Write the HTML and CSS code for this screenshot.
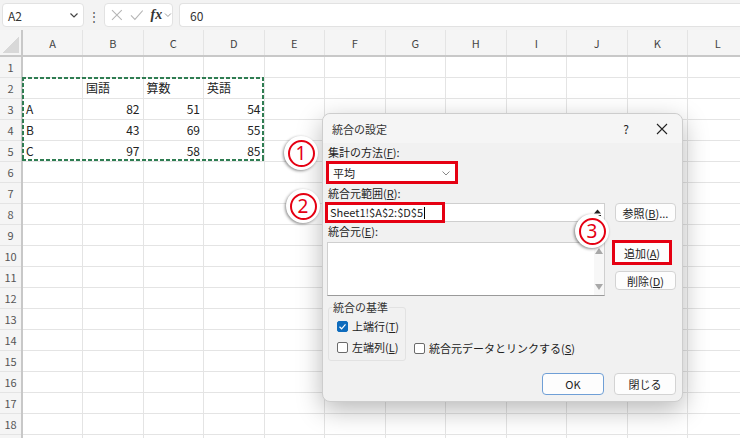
FILE: index.html
```html
<!DOCTYPE html>
<html lang="ja">
<head>
    <meta charset="UTF-8">
    <meta name="viewport" content="width=device-width, initial-scale=1.0">
    <title>統合の設定</title>
    <link rel="stylesheet" href="styles.css">
</head>
<body>
    <div class="app">
        <div class="formula-bar">
            <div class="name-box">
                <span>A2</span>
                <svg width="10" height="10" viewBox="0 0 10 10"><polyline points="1.5,3.5 5,7 8.5,3.5" fill="none" stroke="#444" stroke-width="1.2"/></svg>
            </div>
            <span class="grip">⋮</span>
            <div class="fx-box">
                <svg width="12" height="12" viewBox="0 0 12 12"><path d="M1 1L11 11M11 1L1 11" stroke="#b5b5b5" stroke-width="1.1" fill="none"/></svg>
                <svg width="14" height="12" viewBox="0 0 14 12"><polyline points="1,6.5 5,10.5 13,1.5" stroke="#b5b5b5" stroke-width="1.1" fill="none"/></svg>
                <i class="fx">fx</i>
                <svg width="8" height="8" viewBox="0 0 8 8"><polyline points="1,2.5 4,5.5 7,2.5" fill="none" stroke="#999" stroke-width="1"/></svg>
            </div>
            <div class="formula-input">60</div>
        </div>

        <table class="sheet">
            <colgroup>
                <col class="rh"><col><col><col><col><col><col><col><col><col><col><col><col>
            </colgroup>
            <thead>
                <tr><th class="corner"></th><th>A</th><th>B</th><th>C</th><th>D</th><th>E</th><th>F</th><th>G</th><th>H</th><th>I</th><th>J</th><th>K</th><th>L</th></tr>
            </thead>
            <tbody>
                <tr><th>1</th><td></td><td></td><td></td><td></td><td></td><td></td><td></td><td></td><td></td><td></td><td></td><td></td></tr>
                <tr><th>2</th><td></td><td>国語</td><td>算数</td><td>英語</td><td></td><td></td><td></td><td></td><td></td><td></td><td></td><td></td></tr>
                <tr><th>3</th><td>A</td><td class="num">82</td><td class="num">51</td><td class="num">54</td><td></td><td></td><td></td><td></td><td></td><td></td><td></td><td></td></tr>
                <tr><th>4</th><td>B</td><td class="num">43</td><td class="num">69</td><td class="num">55</td><td></td><td></td><td></td><td></td><td></td><td></td><td></td><td></td></tr>
                <tr><th>5</th><td>C</td><td class="num">97</td><td class="num">58</td><td class="num">85</td><td></td><td></td><td></td><td></td><td></td><td></td><td></td><td></td></tr>
                <tr><th>6</th><td></td><td></td><td></td><td></td><td></td><td></td><td></td><td></td><td></td><td></td><td></td><td></td></tr>
                <tr><th>7</th><td></td><td></td><td></td><td></td><td></td><td></td><td></td><td></td><td></td><td></td><td></td><td></td></tr>
                <tr><th>8</th><td></td><td></td><td></td><td></td><td></td><td></td><td></td><td></td><td></td><td></td><td></td><td></td></tr>
                <tr><th>9</th><td></td><td></td><td></td><td></td><td></td><td></td><td></td><td></td><td></td><td></td><td></td><td></td></tr>
                <tr><th>10</th><td></td><td></td><td></td><td></td><td></td><td></td><td></td><td></td><td></td><td></td><td></td><td></td></tr>
                <tr><th>11</th><td></td><td></td><td></td><td></td><td></td><td></td><td></td><td></td><td></td><td></td><td></td><td></td></tr>
                <tr><th>12</th><td></td><td></td><td></td><td></td><td></td><td></td><td></td><td></td><td></td><td></td><td></td><td></td></tr>
                <tr><th>13</th><td></td><td></td><td></td><td></td><td></td><td></td><td></td><td></td><td></td><td></td><td></td><td></td></tr>
                <tr><th>14</th><td></td><td></td><td></td><td></td><td></td><td></td><td></td><td></td><td></td><td></td><td></td><td></td></tr>
                <tr><th>15</th><td></td><td></td><td></td><td></td><td></td><td></td><td></td><td></td><td></td><td></td><td></td><td></td></tr>
                <tr><th>16</th><td></td><td></td><td></td><td></td><td></td><td></td><td></td><td></td><td></td><td></td><td></td><td></td></tr>
                <tr><th>17</th><td></td><td></td><td></td><td></td><td></td><td></td><td></td><td></td><td></td><td></td><td></td><td></td></tr>
                <tr><th>18</th><td></td><td></td><td></td><td></td><td></td><td></td><td></td><td></td><td></td><td></td><td></td><td></td></tr>
                <tr><th></th><td></td><td></td><td></td><td></td><td></td><td></td><td></td><td></td><td></td><td></td><td></td><td></td></tr>
            </tbody>
        </table>

        <!-- copy range A2:D5 -->
        <div class="marching-ants"></div>

        <div class="dialog">
            <div class="dlg-title">
                <span class="dlg-name">統合の設定</span>
                <span class="dlg-help">?</span>
                <svg class="dlg-close" width="12" height="12" viewBox="0 0 12 12"><path d="M1 1L11 11M11 1L1 11" stroke="#222" stroke-width="1.1" fill="none"/></svg>
            </div>
            <div class="dlg-body">
                <div class="field-label">集計の方法(<u>F</u>):</div>
                <div class="select">
                    <span>平均</span>
                    <svg width="10" height="10" viewBox="0 0 10 10"><polyline points="1.5,3.5 5,7 8.5,3.5" fill="none" stroke="#888" stroke-width="1"/></svg>
                </div>

                <div class="field-label">統合元範囲(<u>R</u>):</div>
                <div class="ref-input">
                    <span class="ref-value">Sheet1!$A$2:$D$5<i class="caret"></i></span>
                    <svg class="collapse" width="9" height="9" viewBox="0 0 9 9"><path d="M1 5.5L4.5 1.5L8 5.5Z" fill="#222"/><path d="M1 7.5H8" stroke="#222" stroke-width="1"/></svg>
                </div>
                <button type="button" class="btn ref-btn">参照(<u>B</u>)...</button>

                <div class="field-label">統合元(<u>E</u>):</div>
                <div class="list-box">
                    <div class="scroll">
                        <svg width="8" height="6" viewBox="0 0 8 6"><path d="M0 6L4 0L8 6Z" fill="#a8a8a8"/></svg>
                        <svg width="8" height="6" viewBox="0 0 8 6"><path d="M0 0L4 6L8 0Z" fill="#a8a8a8"/></svg>
                    </div>
                </div>
                <div class="side-buttons">
                    <button type="button" class="btn marked">追加(<u>A</u>)</button>
                    <button type="button" class="btn">削除(<u>D</u>)</button>
                </div>

                <div class="options">
                    <fieldset class="group">
                        <legend>統合の基準</legend>
                        <label class="check"><span class="box checked"><svg width="9" height="9" viewBox="0 0 9 9"><polyline points="1.5,4.8 3.6,6.8 7.5,2.4" fill="none" stroke="#fff" stroke-width="1.2"/></svg></span>上端行(<u>T</u>)</label>
                        <label class="check"><span class="box"></span>左端列(<u>L</u>)</label>
                    </fieldset>
                    <label class="check link-check"><span class="box"></span>統合元データとリンクする(<u>S</u>)</label>
                </div>

                <div class="dlg-footer">
                    <button type="button" class="btn ok">OK</button>
                    <button type="button" class="btn">閉じる</button>
                </div>
            </div>
        </div>

        <div class="badge b1"><span>1</span></div>
        <div class="badge b2"><span>2</span></div>
        <div class="badge b3"><span>3</span></div>
    </div>
</body>
</html>
```

FILE: styles.css
```css
html, body {
    margin: 0;
    overflow: hidden;
}
body {
    font-family: "Noto Sans CJK JP", "Noto Sans", sans-serif;
    color: #222;
    background: #fff;
}
.app {
    position: relative;
    width: 740px;
    height: 438px;
    overflow: hidden;
}

/* formula bar */
.formula-bar {
    display: flex;
    align-items: center;
    height: 30px;
    background: #f3f3f3;
}
.name-box {
    display: flex;
    align-items: center;
    justify-content: space-between;
    box-sizing: border-box;
    width: 82px;
    height: 24px;
    margin-left: 2px;
    padding: 0 4px 0 5px;
    background: #fff;
    border: 1px solid #e2e2e2;
    border-radius: 4px;
    font-size: 12px;
    color: #333;
}
.grip {
    width: 20px;
    text-align: center;
    font-size: 12px;
    color: #555;
}
.fx-box {
    display: flex;
    align-items: center;
    gap: 7px;
    box-sizing: border-box;
    width: 69px;
    height: 24px;
    padding-left: 6px;
    background: #fff;
    border: 1px solid #e2e2e2;
    border-radius: 4px;
}
.fx {
    font-family: "Liberation Serif", serif;
    font-weight: bold;
    font-size: 14px;
    color: #333;
    margin-right: -5px;
}
.formula-input {
    flex: 1;
    box-sizing: border-box;
    height: 24px;
    margin-left: 6px;
    padding-left: 10px;
    line-height: 24px;
    background: #fff;
    border: 1px solid #e2e2e2;
    border-right: none;
    border-radius: 4px 0 0 4px;
    font-size: 12px;
    color: #333;
}

/* grid */
.sheet {
    border-collapse: collapse;
    table-layout: fixed;
    width: 748px;
    font-size: 12px;
}
.sheet col {
    width: 60.5px;
}
.sheet col.rh {
    width: 22px;
}
.sheet thead th {
    height: 25px;
    padding: 0;
    background: #f5f5f5;
    border-right: 1px solid #e4e4e4;
    border-bottom: 2px solid #c8c8c8;
    font-weight: normal;
    font-size: 11px;
    color: #444;
}
.sheet thead th.corner {
    border-right: 2px solid #c8c8c8;
    background: linear-gradient(135deg, transparent 50%, #d8d8d8 50%) no-repeat right 2px bottom 2px / 16px 16px, #f5f5f5;
}
.sheet tbody tr {
    height: 21px;
}
.sheet tbody th {
    padding: 0;
    background: #f5f5f5;
    border-right: 2px solid #c8c8c8;
    border-bottom: 1px solid #e4e4e4;
    font-weight: normal;
    font-size: 11px;
    color: #555;
}
.sheet td {
    padding: 0 3px 0 3px;
    border: 1px solid #e4e4e4;
    line-height: 18px;
    white-space: nowrap;
}
.sheet td.num {
    text-align: right;
}

.marching-ants {
    position: absolute;
    left: 22px;
    top: 77px;
    width: 242px;
    height: 84px;
    box-sizing: border-box;
    background:
        repeating-linear-gradient(90deg, #2f7d52 0 4px, transparent 4px 6px) left top / 100% 2px no-repeat,
        repeating-linear-gradient(90deg, #2f7d52 0 4px, transparent 4px 6px) left bottom / 100% 2px no-repeat,
        repeating-linear-gradient(180deg, #2f7d52 0 4px, transparent 4px 6px) left top / 2px 100% no-repeat,
        repeating-linear-gradient(180deg, #2f7d52 0 4px, transparent 4px 6px) right top / 2px 100% no-repeat;
}

/* dialog */
.dialog {
    position: absolute;
    left: 322px;
    top: 113px;
    width: 361px;
    height: 289px;
    box-sizing: border-box;
    background: #f1f1f1;
    border: 1px solid #cdcdcd;
    border-radius: 8px;
    box-shadow: 0 8px 26px rgba(0, 0, 0, 0.28);
    font-size: 11px;
}
.dlg-title {
    display: flex;
    align-items: center;
    height: 29px;
    padding: 0 0 0 9px;
    background: #f5f5f5;
    border-radius: 8px 8px 0 0;
}
.dlg-name {
    flex: 1;
    color: #333;
}
.dlg-help {
    width: 20px;
    margin-right: 20px;
    font-size: 12px;
    text-align: center;
    color: #222;
}
.dlg-close {
    margin-right: 14px;
}
.dlg-body {
    display: grid;
    grid-template-columns: 279px 61px;
    column-gap: 10px;
    padding: 0 6px 0 3px;
}
.field-label {
    grid-column: 1 / -1;
    height: 18px;
    line-height: 18px;
    padding-left: 2px;
    color: #222;
}
.select {
    grid-column: 1;
    display: flex;
    align-items: center;
    justify-content: space-between;
    box-sizing: border-box;
    width: 132px;
    height: 23px;
    padding: 0 4px 0 4px;
    background: #fff;
    border: 3px solid #e50012;
}
.ref-input {
    grid-column: 1;
    display: flex;
    align-items: center;
    justify-content: space-between;
    box-sizing: border-box;
    height: 19px;
    margin-top: 1px;
    background: #fff;
    border: 1px solid #cfcfcf;
}
.ref-value {
    box-sizing: border-box;
    width: 120px;
    height: 21px;
    margin: -1px 0 0 -2px;
    padding: 0 2px;
    line-height: 15px;
    border: 3px solid #e50012;
    font-size: 11px;
}
.caret {
    display: inline-block;
    width: 1px;
    height: 12px;
    margin-left: 1px;
    vertical-align: -2px;
    background: #000;
}
.collapse {
    margin-right: 2px;
}
.btn {
    box-sizing: border-box;
    height: 19px;
    padding: 0;
    background: #fdfdfd;
    border: 1px solid #d3d3d3;
    border-radius: 4px;
    font-family: inherit;
    font-size: 11px;
    color: #222;
}
.ref-btn {
    grid-column: 2;
    margin-top: 1px;
}
.list-box {
    grid-column: 1;
    display: flex;
    justify-content: flex-end;
    box-sizing: border-box;
    height: 54px;
    margin-top: 2px;
    margin-left: 1px;
    background: #fff;
    border: 1px solid #cfcfcf;
    border-bottom-color: #9a9a9a;
}
.scroll {
    display: flex;
    flex-direction: column;
    justify-content: space-between;
    align-items: center;
    width: 10px;
    padding: 5px 0;
    background: #f7f7f7;
}
.side-buttons {
    grid-column: 2;
    display: flex;
    flex-direction: column;
    gap: 6px;
}
.side-buttons .btn.marked {
    height: 25px;
    margin: 0 4px 0 -3px;
    border: 3px solid #e50012;
    border-radius: 0;
}
.options {
    grid-column: 1 / -1;
    display: flex;
    align-items: flex-end;
    margin-top: 4px;
}
.group {
    box-sizing: border-box;
    width: 78px;
    margin: 0 0 0 2px;
    padding: 3px 0 4px 4px;
    border: 1px solid #e2e2e2;
    border-radius: 3px;
}
.group legend {
    padding: 0 1px;
    margin-left: -1px;
    line-height: 14px;
    color: #333;
}
.check {
    display: flex;
    align-items: center;
    height: 18px;
    padding-left: 4px;
    color: #222;
}
.group .check + .check {
    margin-top: 3px;
}
.box {
    display: flex;
    align-items: center;
    justify-content: center;
    box-sizing: border-box;
    width: 11px;
    height: 11px;
    margin-right: 4px;
    background: #fff;
    border: 1px solid #6a6a6a;
    border-radius: 2px;
}
.box.checked {
    background: #0f6cbd;
    border-color: #0f6cbd;
}
.link-check {
    margin-left: 4px;
    margin-bottom: 4px;
}
.dlg-footer {
    grid-column: 1 / -1;
    display: flex;
    justify-content: flex-end;
    gap: 10px;
    margin-top: 12px;
}
.dlg-footer .btn {
    width: 62px;
    height: 22px;
}
.dlg-footer .btn.ok {
    border-color: #6f9fd6;
}

/* annotation markers */
.badge {
    position: absolute;
    display: flex;
    align-items: center;
    justify-content: center;
    width: 34px;
    height: 34px;
    border-radius: 50%;
    background: #fff;
    box-shadow: -1px 1px 3px rgba(0, 0, 0, 0.45);
}
.badge span {
    box-sizing: border-box;
    width: 27px;
    height: 27px;
    border: 2px solid #e50012;
    border-radius: 50%;
    font-family: "Noto Sans", sans-serif;
    font-size: 19px;
    line-height: 23px;
    text-align: center;
    color: #e50012;
}
.b1 { left: 284px; top: 136px; }
.b2 { left: 286px; top: 189px; }
.b3 { left: 575px; top: 214px; }
```
